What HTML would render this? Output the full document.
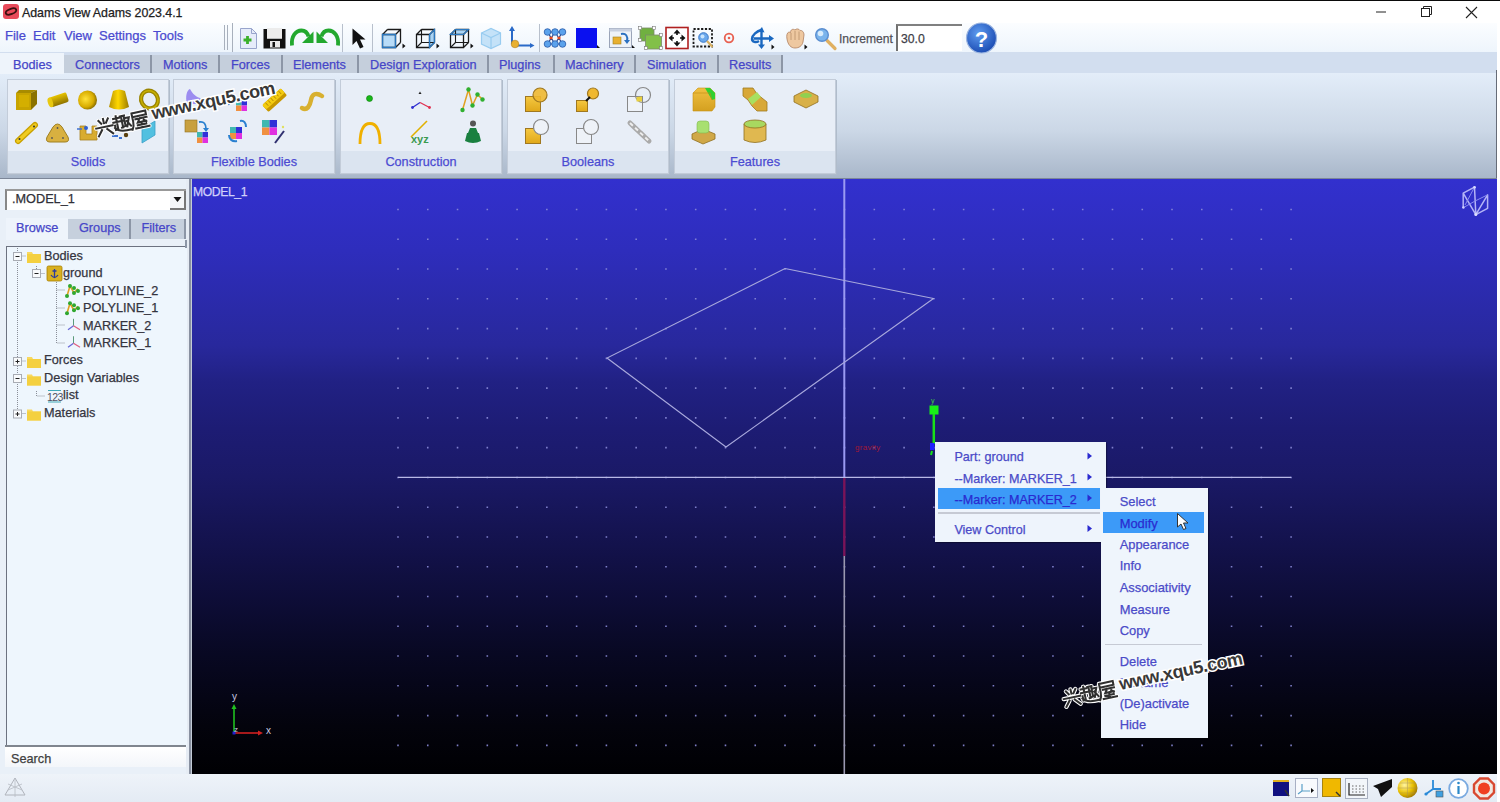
<!DOCTYPE html><html><head><meta charset="utf-8"><style>
*{margin:0;padding:0;box-sizing:border-box}
html,body{width:1500px;height:802px;overflow:hidden;background:#fff;font-family:"Liberation Sans",sans-serif;position:relative}
.a{position:absolute}
.t{position:absolute;white-space:pre;line-height:1;-webkit-text-stroke:0.25px currentColor}
svg{position:absolute;overflow:visible}
</style></head><body>
<div class="a" style="left:0;top:0;width:1500px;height:23px;background:#fff"></div>
<div class="a" style="left:0;top:0;width:1500px;height:1px;background:#0a0a0a"></div>
<div class="a" style="left:0;top:23px;width:1497px;height:29px;background:linear-gradient(#fbfdff,#eef5fc)"></div>
<div class="a" style="left:0;top:52px;width:1497px;height:21px;background:#d2deef"></div>
<div class="a" style="left:0;top:73px;width:1497px;height:106px;background:linear-gradient(#e3edf9,#cbd7e6 55%,#a8b6c9)"></div>
<div class="a" style="left:1496px;top:70px;width:1px;height:109px;background:#666c78"></div>
<div class="a" style="left:1497px;top:23px;width:3px;height:779px;background:#fff"></div>
<div class="a" style="left:0;top:177.5px;width:1497px;height:1.5px;background:#7c8698"></div>
<div class="a" style="left:0;top:179px;width:192px;height:595px;background:#e9f0f8"></div>
<div class="a" style="left:186px;top:179px;width:6px;height:595px;background:linear-gradient(90deg,#e6ecf4 0,#e6ecf4 50%,#8890a0 50%,#8890a0 83%,#c4ccd8 83%)"></div>
<div class="a" style="left:192px;top:179px;width:1305px;height:595px;background:linear-gradient(rgb(50,48,206) 0%,rgb(46,45,188) 12%,rgb(40,40,156) 28%,rgb(33,33,132) 34%,rgb(29,28,116) 42%,rgb(26,25,102) 50%,rgb(17,16,68) 65%,rgb(8,8,34) 80%,rgb(3,3,12) 92%,rgb(0,0,3) 100%)"></div>
<div class="a" style="left:0;top:774px;width:1497px;height:28px;background:linear-gradient(#eef3f9,#e4ebf4)"></div>
<div class="a" style="left:3px;top:4px;width:16px;height:15px;border-radius:3px;background:#e84a5a"></div>
<svg style="left:0;top:0" width="30" height="23"><ellipse cx="11" cy="11.5" rx="5.5" ry="2.6" fill="none" stroke="#3a1010" stroke-width="1.8" transform="rotate(-20 11 11.5)"/></svg>
<div class="t" style="left:22px;top:6.50px;font-size:12.4px;color:#202020;letter-spacing:-0.05px">Adams View Adams 2023.4.1</div>
<svg style="left:1360px;top:0" width="130" height="23"><line x1="16" y1="12" x2="26" y2="12" stroke="#222" stroke-width="1"/><rect x="61.5" y="8.5" width="8" height="8" fill="none" stroke="#222"/><path d="M63.5 8.5V6.5H71.5V14.5H69.5" fill="none" stroke="#222"/><path d="M106 7L117 18M117 7L106 18" stroke="#222" stroke-width="1.1"/></svg>
<div class="t" style="left:5px;top:29.00px;font-size:13px;color:#4a4ad0;">File</div>
<div class="t" style="left:33px;top:29.00px;font-size:13px;color:#4a4ad0;">Edit</div>
<div class="t" style="left:64px;top:29.00px;font-size:13px;color:#4a4ad0;">View</div>
<div class="t" style="left:99px;top:29.00px;font-size:13px;color:#4a4ad0;">Settings</div>
<div class="t" style="left:153px;top:29.00px;font-size:13px;color:#4a4ad0;">Tools</div>
<div class="a" style="left:0;top:53px;width:64px;height:21px;background:#eef4fb"></div>
<div class="a" style="left:64px;top:55px;width:719px;height:18px;background:#c5cfdc"></div>
<div class="t" style="left:13px;top:58.85px;font-size:12.7px;color:#4646c8;">Bodies</div>
<div class="a" style="left:150px;top:55px;width:2px;height:18px;background:#8c96a6"></div>
<div class="t" style="left:75px;top:59.05px;font-size:12.7px;color:#4646c8;">Connectors</div>
<div class="a" style="left:218px;top:55px;width:2px;height:18px;background:#8c96a6"></div>
<div class="t" style="left:163px;top:59.05px;font-size:12.7px;color:#4646c8;">Motions</div>
<div class="a" style="left:281px;top:55px;width:2px;height:18px;background:#8c96a6"></div>
<div class="t" style="left:231px;top:59.05px;font-size:12.7px;color:#4646c8;">Forces</div>
<div class="a" style="left:357px;top:55px;width:2px;height:18px;background:#8c96a6"></div>
<div class="t" style="left:293px;top:59.05px;font-size:12.7px;color:#4646c8;">Elements</div>
<div class="a" style="left:487px;top:55px;width:2px;height:18px;background:#8c96a6"></div>
<div class="t" style="left:370px;top:59.05px;font-size:12.7px;color:#4646c8;">Design Exploration</div>
<div class="a" style="left:553px;top:55px;width:2px;height:18px;background:#8c96a6"></div>
<div class="t" style="left:499px;top:59.05px;font-size:12.7px;color:#4646c8;">Plugins</div>
<div class="a" style="left:634px;top:55px;width:2px;height:18px;background:#8c96a6"></div>
<div class="t" style="left:565px;top:59.05px;font-size:12.7px;color:#4646c8;">Machinery</div>
<div class="a" style="left:717px;top:55px;width:2px;height:18px;background:#8c96a6"></div>
<div class="t" style="left:647px;top:59.05px;font-size:12.7px;color:#4646c8;">Simulation</div>
<div class="a" style="left:781px;top:55px;width:2px;height:18px;background:#8c96a6"></div>
<div class="t" style="left:729px;top:59.05px;font-size:12.7px;color:#4646c8;">Results</div>
<div class="a" style="left:7px;top:79px;width:162px;height:95px;background:#e8eef7;border:1px solid #c3ccd9;box-shadow:1px 1px 0 #b0bccb"></div>
<div class="a" style="left:8px;top:151px;width:160px;height:22px;background:#dbe4f0"></div>
<div class="t" style="left:7px;width:162px;text-align:center;top:155.65px;font-size:12.7px;color:#4b4bd2">Solids</div>
<div class="a" style="left:173px;top:79px;width:162px;height:95px;background:#e8eef7;border:1px solid #c3ccd9;box-shadow:1px 1px 0 #b0bccb"></div>
<div class="a" style="left:174px;top:151px;width:160px;height:22px;background:#dbe4f0"></div>
<div class="t" style="left:173px;width:162px;text-align:center;top:155.65px;font-size:12.7px;color:#4b4bd2">Flexible Bodies</div>
<div class="a" style="left:340px;top:79px;width:162px;height:95px;background:#e8eef7;border:1px solid #c3ccd9;box-shadow:1px 1px 0 #b0bccb"></div>
<div class="a" style="left:341px;top:151px;width:160px;height:22px;background:#dbe4f0"></div>
<div class="t" style="left:340px;width:162px;text-align:center;top:155.65px;font-size:12.7px;color:#4b4bd2">Construction</div>
<div class="a" style="left:507px;top:79px;width:162px;height:95px;background:#e8eef7;border:1px solid #c3ccd9;box-shadow:1px 1px 0 #b0bccb"></div>
<div class="a" style="left:508px;top:151px;width:160px;height:22px;background:#dbe4f0"></div>
<div class="t" style="left:507px;width:162px;text-align:center;top:155.65px;font-size:12.7px;color:#4b4bd2">Booleans</div>
<div class="a" style="left:674px;top:79px;width:162px;height:95px;background:#e8eef7;border:1px solid #c3ccd9;box-shadow:1px 1px 0 #b0bccb"></div>
<div class="a" style="left:675px;top:151px;width:160px;height:22px;background:#dbe4f0"></div>
<div class="t" style="left:674px;width:162px;text-align:center;top:155.65px;font-size:12.7px;color:#4b4bd2">Features</div>
<div class="t" style="left:839px;top:31.99px;font-size:13.6px;color:#505058;transform:scaleX(0.89);transform-origin:left">Increment</div>
<div class="a" style="left:896px;top:24px;width:66px;height:27px;background:#fff;border-left:2px solid #707070;border-top:2px solid #808080"></div>
<div class="t" style="left:901px;top:31.99px;font-size:13.6px;color:#404048;transform:scaleX(0.9);transform-origin:left">30.0</div>
<svg style="left:0;top:0" width="1500" height="802" viewBox="0 0 1500 802">
<defs>
<radialGradient id="gsph" cx="0.4" cy="0.45" r="0.6"><stop offset="0" stop-color="#ffe23a"/><stop offset="0.7" stop-color="#d8ac00"/><stop offset="1" stop-color="#8a6e00"/></radialGradient>
<linearGradient id="gcone" x1="0" x2="1"><stop offset="0" stop-color="#b89200"/><stop offset="0.45" stop-color="#ffd800"/><stop offset="1" stop-color="#9a7a00"/></linearGradient>
<linearGradient id="gcyl" x1="0" y1="0" x2="0" y2="1"><stop offset="0" stop-color="#e8c400"/><stop offset="1" stop-color="#8f7300"/></linearGradient>
<linearGradient id="gbool" x1="0" y1="0" x2="0" y2="1"><stop offset="0" stop-color="#f5c842"/><stop offset="1" stop-color="#e0a81a"/></linearGradient>
<linearGradient id="gfeat" x1="0" y1="0" x2="0" y2="1"><stop offset="0" stop-color="#f0c040"/><stop offset="1" stop-color="#d4a020"/></linearGradient>
<linearGradient id="gblue" x1="0" y1="0" x2="1" y2="1"><stop offset="0" stop-color="#bfe6ff"/><stop offset="1" stop-color="#3d9be0"/></linearGradient>
<radialGradient id="ghelp" cx="0.4" cy="0.35" r="0.7"><stop offset="0" stop-color="#5f9cf0"/><stop offset="1" stop-color="#1848b0"/></radialGradient>
<radialGradient id="gglobe" cx="0.35" cy="0.35" r="0.7"><stop offset="0" stop-color="#fff4a0"/><stop offset="0.6" stop-color="#e8c000"/><stop offset="1" stop-color="#a07800"/></radialGradient>
</defs>
<path d="M224.5 25V50M227.5 25V50M232.5 23V52" stroke="#a8b0bc" stroke-width="1"/>
<path d="M342.5 24V52M372.5 24V52M539.5 24V52" stroke="#b8c0cc" stroke-width="1"/>
<path d="M240.5 28.5H251.5L256.5 33.5V48.5H240.5Z" fill="#e6ecfa" stroke="#98a4cc"/><path d="M251.5 28.5V33.5H256.5" fill="none" stroke="#98a4cc"/>
<path d="M247.5 36V44M243.5 40H251.5" stroke="#3ab02a" stroke-width="2.8"/>
<path d="M263.5 29H267V38.5H282V29H285.5V48.5H263.5Z" fill="#111"/><rect x="267" y="28" width="15" height="10.5" fill="#ececec"/><rect x="270" y="41" width="10" height="6.5" fill="#e8e8e8"/><rect x="272.5" y="42" width="2.5" height="5" fill="#111"/>
<path d="M292 45.5C291 36 296 30.5 301.5 30.5C305 30.5 307.5 33 308.5 36.5" fill="none" stroke="#22a82e" stroke-width="3.8"/><path d="M313.5 31.5V43H302Z" fill="#22a82e"/>
<path d="M338 45.5C339 36 334 30.5 328.5 30.5C325 30.5 322.5 33 321.5 36.5" fill="none" stroke="#22a82e" stroke-width="3.8"/><path d="M316.5 31.5V43H328Z" fill="#22a82e"/>
<path d="M352.5 28.5V45L356.5 41L360 48.5L363.5 47L360 39.5H365.5Z" fill="#111"/>
<g transform="translate(382,28)"><path d="M0.5 6.5H13.5V19.5H0.5Z" fill="#b8dcf8"/><path d="M0.5 6.5H13.5V19.5H0.5ZM5.5 1.5H18.5V14.5M0.5 6.5L5.5 1.5M13.5 6.5L18.5 1.5M13.5 19.5L18.5 14.5" fill="none" stroke="#1a1a1a" stroke-width="1.3"/><path d="M0.5 6.5H13.5V19.5H0.5Z" fill="none" stroke="#2a78c0" stroke-width="1.3"/><path d="M20.5 15.5L23.5 18L20.5 20.5Z" fill="#111"/></g>
<g transform="translate(416,28)"><path d="M13.5 6.5L18.5 1.5V14.5L13.5 19.5Z" fill="#a8d4f6"/><path d="M0.5 6.5H13.5V19.5H0.5ZM5.5 1.5H18.5V14.5M0.5 6.5L5.5 1.5M13.5 6.5L18.5 1.5M13.5 19.5L18.5 14.5" fill="none" stroke="#1a1a1a" stroke-width="1.3"/><path d="M5.5 1.5V14.5H18.5M5.5 14.5L0.5 19.5" fill="none" stroke="#1a1a1a" stroke-width="1.1"/><path d="M13.5 6.5L18.5 1.5V14.5L13.5 19.5Z" fill="none" stroke="#2a78c0" stroke-width="1.2"/><path d="M20.5 15.5L23.5 18L20.5 20.5Z" fill="#111"/></g>
<g transform="translate(450,28)"><path d="M0.5 6.5L5.5 1.5H18.5L13.5 6.5Z" fill="#a8d4f6"/><path d="M0.5 6.5H13.5V19.5H0.5ZM5.5 1.5H18.5V14.5M0.5 6.5L5.5 1.5M13.5 6.5L18.5 1.5M13.5 19.5L18.5 14.5" fill="none" stroke="#1a1a1a" stroke-width="1.3"/><path d="M5.5 1.5V14.5H18.5M5.5 14.5L0.5 19.5" fill="none" stroke="#1a1a1a" stroke-width="1.1"/><path d="M0.5 6.5L5.5 1.5H18.5L13.5 6.5Z" fill="none" stroke="#2a78c0" stroke-width="1.2"/><path d="M20.5 15.5L23.5 18L20.5 20.5Z" fill="#111"/></g>
<path d="M481.5 33L491 28.5L500.5 33V44L491 48.5L481.5 44Z" fill="#c4e2f8" stroke="#98ccf0" stroke-width="1.2"/><path d="M481.5 33L491 37.5L500.5 33M491 37.5V48.5" fill="none" stroke="#98ccf0" stroke-width="1.2"/>
<path d="M512 44V29M515 45.5H531" stroke="#2a6ac8" stroke-width="2"/><path d="M509 31L512 26L515 31Z" fill="#2a6ac8"/><path d="M530 43L534.5 45.5L530 48Z" fill="#2a6ac8"/><circle cx="515" cy="44" r="3.8" fill="#e8b030" stroke="#b08020" stroke-width="0.6"/>
<path d="M547.5 32L555 44M555 32L547.5 44M555 32L562.5 44M562.5 32L555 44M547.5 32H562.5M547.5 44H562.5" stroke="#2a4a90" stroke-width="1.2"/><path d="M549.5 38H552.5M557.5 38H560.5" stroke="#e84a20" stroke-width="2.4"/>
<circle cx="547.5" cy="32" r="3.3" fill="#5aa2ec" stroke="#2a5aa8" stroke-width="0.8"/>
<circle cx="555" cy="32" r="3.3" fill="#5aa2ec" stroke="#2a5aa8" stroke-width="0.8"/>
<circle cx="562.5" cy="32" r="3.3" fill="#5aa2ec" stroke="#2a5aa8" stroke-width="0.8"/>
<circle cx="547.5" cy="44" r="3.3" fill="#5aa2ec" stroke="#2a5aa8" stroke-width="0.8"/>
<circle cx="555" cy="44" r="3.3" fill="#5aa2ec" stroke="#2a5aa8" stroke-width="0.8"/>
<circle cx="562.5" cy="44" r="3.3" fill="#5aa2ec" stroke="#2a5aa8" stroke-width="0.8"/>
<rect x="576" y="28" width="21" height="20" fill="#0a10f0"/><path d="M597 45L600 48H597Z" fill="#111"/>
<rect x="609.5" y="28.5" width="22" height="19" fill="#eef2f8" stroke="#9aa4b8"/><rect x="609.5" y="28.5" width="22" height="3" fill="#c8d0e0"/><rect x="613" y="37" width="8" height="7" fill="#e8b030" stroke="#a08020" stroke-width="0.6"/><path d="M621 34C626 33 628 36 627 41" fill="none" stroke="#2a70c0" stroke-width="2"/><path d="M624 40L627 44L630 40Z" fill="#2a70c0"/><path d="M632 45L635 48H632Z" fill="#111"/>
<rect x="640" y="28" width="14" height="13" fill="#70b040" stroke="#7a8a6a" stroke-width="0.8"/><rect x="645.5" y="35" width="16" height="14" fill="#82c048" stroke="#7a8a6a" stroke-width="0.8"/>
<rect x="638.5" y="26.5" width="3" height="3" fill="#fff" stroke="#777" stroke-width="0.6"/>
<rect x="652.5" y="26.5" width="3" height="3" fill="#fff" stroke="#777" stroke-width="0.6"/>
<rect x="638.5" y="38.5" width="3" height="3" fill="#fff" stroke="#777" stroke-width="0.6"/>
<rect x="659.5" y="33.5" width="3" height="3" fill="#fff" stroke="#777" stroke-width="0.6"/>
<rect x="644.5" y="46.5" width="3" height="3" fill="#fff" stroke="#777" stroke-width="0.6"/>
<rect x="659.5" y="46.5" width="3" height="3" fill="#fff" stroke="#777" stroke-width="0.6"/>
<rect x="666" y="27.5" width="22" height="21" fill="#fff" stroke="#b02020" stroke-width="1.6"/>
<path d="M677 32V35M677 41V44M671 38H674M680 38H683" stroke="#111" stroke-width="1.6"/><path d="M673.5 33.5L677 29.5L680.5 33.5ZM673.5 42.5L677 46.5L680.5 42.5ZM672.5 34.5L668.5 38L672.5 41.5ZM681.5 34.5L685.5 38L681.5 41.5Z" fill="#111"/>
<rect x="693.5" y="29" width="18.5" height="17.5" fill="none" stroke="#1a1a1a" stroke-width="1.8" stroke-dasharray="2.2 1.6"/><circle cx="703.5" cy="37.5" r="4.8" fill="#6aa8ec" stroke="#3a78c8" stroke-width="1"/><circle cx="702.5" cy="36.5" r="2" fill="#c8e4fc"/><path d="M707 41L712.5 47" stroke="#d8b060" stroke-width="2.2"/>
<circle cx="729" cy="38" r="4.3" fill="none" stroke="#e86050" stroke-width="1.8"/><circle cx="729" cy="38" r="1.3" fill="#e86050"/>
<path d="M761.5 30C757 31 752 35 752 39C752 42 756 43 759 41M761.5 30V47M753.5 38.5H770" fill="none" stroke="#1a68c0" stroke-width="2.4"/><path d="M758 31.5L762 27L764.5 32.5Z M769 35L774 38.5L769 42Z M758 44.5L761.5 49L765 44.5Z" fill="#1a68c0"/><path d="M771.5 44.5L774.5 47L771.5 49.5Z" fill="#111"/>
<path d="M787 39C786 34 788 31 790.5 32.5C790.5 29.5 793 28.5 795 30C796 28.5 799 28.5 800 30.5C802 30 804 32 804 35L803 42C802 46 799 48 795 48C791 48 788 45 787 39Z" fill="#eec8a0" stroke="#b08060" stroke-width="0.8"/><path d="M791 33V40M795 31V40M799 31.5V40" stroke="#b8906a" stroke-width="0.8"/><path d="M804.5 44.5L807.5 47L804.5 49.5Z" fill="#111"/>
<path d="M827 40.5L835 48.5" stroke="#e0b060" stroke-width="3.2" stroke-linecap="round"/><circle cx="822" cy="35" r="6.3" fill="#7ab4ec" stroke="#5a8ed0" stroke-width="1.4"/><circle cx="820.5" cy="33.5" r="2.8" fill="#d8ecfc"/>
<circle cx="981.5" cy="38" r="15" fill="url(#ghelp)" stroke="#9ab4e0" stroke-width="1.2"/><text x="981.5" y="47" font-family="Liberation Sans" font-weight="bold" font-size="22" fill="#fff" text-anchor="middle">?</text>
<path d="M16 93H31V110H16Z" fill="#c8a400"/><path d="M19 95H29V107H19Z" fill="#d8b400" opacity="0.7"/><path d="M16 93L19 90H37L31 93Z" fill="#a88c00"/><path d="M31 93L37 90V104L31 110Z" fill="#8a7200"/>
<g transform="rotate(-18 58 100)"><rect x="49" y="95" width="19" height="10" rx="2" fill="url(#gcyl)"/><ellipse cx="50" cy="100" rx="2.5" ry="5" fill="#e8c810"/></g>
<circle cx="87.5" cy="100" r="9.5" fill="url(#gsph)"/>
<path d="M113 91Q119 88 125 91L129 107Q119 112 109 107Z" fill="url(#gcone)"/>
<ellipse cx="149.5" cy="99.5" rx="8.3" ry="9" fill="none" stroke="#9a8400" stroke-width="4.2" transform="rotate(-30 149.5 99.5)"/><ellipse cx="149.5" cy="99.5" rx="8.3" ry="9" fill="none" stroke="#c8b000" stroke-width="1.5" transform="rotate(-30 149.5 99.5)"/>
<path d="M18 141L35 125" stroke="#c8a000" stroke-width="6" stroke-linecap="round"/><path d="M18 141L35 125" stroke="#f0cc20" stroke-width="3.5" stroke-linecap="round"/><circle cx="19.5" cy="139" r="1" fill="#333"/><circle cx="34" cy="126.5" r="1" fill="#333"/>
<path d="M57.5 124Q60 124 62 127L68 137Q70 142 65 142H50Q45 142 47 137L53 127Q55 124 57.5 124Z" fill="#d8b040" stroke="#a08020"/><circle cx="57.5" cy="128" r="0.9" fill="#555"/><circle cx="52" cy="138" r="0.9" fill="#555"/><circle cx="63" cy="138" r="0.9" fill="#555"/>
<path d="M80 126H86V134H92V126H97V140H80Z" fill="#d8ac30" stroke="#a88220" stroke-width="0.8"/><circle cx="86" cy="128" r="2" fill="#3060d0"/><path d="M77 129H82" stroke="#4070d0" stroke-width="1.5"/>
<path d="M112 136H118M119 138H122" stroke="#3a70d0" stroke-width="1.8"/><circle cx="126" cy="135" r="2.2" fill="#5a4010"/>
<path d="M155 121V135L142 143V129Z" fill="#52c0e0" stroke="#3aa0c8" stroke-width="0.8"/>
<path d="M187 104C185 96 187 90 190 89C192 92 194 96 200 98C204 99 206 101 205 104Z" fill="#9c8cf0"/>
<rect x="236" y="100" width="5.5" height="5.5" fill="#40b8b0"/><rect x="241.5" y="100" width="5.5" height="5.5" fill="#3030d8"/><rect x="236" y="105.5" width="5.5" height="5.5" fill="#f09040"/><rect x="241.5" y="105.5" width="5.5" height="5.5" fill="#e030e0"/>
<path d="M229 105C227 100 229 94 234 92" fill="none" stroke="#2a80d0" stroke-width="2"/><path d="M240 91C244 91 247 94 247 97" fill="none" stroke="#2a80d0" stroke-width="1.5" stroke-dasharray="2 1.5"/>
<g transform="rotate(-42 274.5 100)"><rect x="262" y="95.5" width="25" height="9.5" rx="1.5" fill="#c89800"/><rect x="262" y="95.5" width="25" height="6" rx="1.5" fill="#f4cc10"/><path d="M266 96V100M269.5 96V100M273 96V100M276.5 96V100M280 96V100M283.5 96V100" stroke="#b08400" stroke-width="0.9"/></g>
<path d="M302 108C307 111 310 106 311 100C312 94 316 92 322 96" fill="none" stroke="#d8b030" stroke-width="4.5" stroke-linecap="round"/>
<rect x="185" y="120" width="12" height="12" fill="#c8a040" stroke="#907020" stroke-width="0.6"/><rect x="197" y="132" width="5.5" height="5.5" fill="#40b8b0"/><rect x="202.5" y="132" width="5.5" height="5.5" fill="#3030d8"/><rect x="197" y="137.5" width="5.5" height="5.5" fill="#f09040"/><rect x="202.5" y="137.5" width="5.5" height="5.5" fill="#e030e0"/><path d="M199 122C204 121 206 124 206 129" fill="none" stroke="#2a80d0" stroke-width="1.8"/><path d="M203 128L206 132L209 128Z" fill="#2a80d0"/>
<rect x="230" y="127" width="6.0" height="6.0" fill="#40b8b0"/><rect x="236.0" y="127" width="6.0" height="6.0" fill="#3030d8"/><rect x="230" y="133.0" width="6.0" height="6.0" fill="#f09040"/><rect x="236.0" y="133.0" width="6.0" height="6.0" fill="#e030e0"/><path d="M240 121C244 120 246 123 246 127M237 141C232 142 229 139 229 135" fill="none" stroke="#2a80d0" stroke-width="2"/>
<rect x="262" y="120" width="7.5" height="7.5" fill="#40b8b0"/><rect x="269.5" y="120" width="7.5" height="7.5" fill="#3030d8"/><rect x="262" y="127.5" width="7.5" height="7.5" fill="#f09040"/><rect x="269.5" y="127.5" width="7.5" height="7.5" fill="#e030e0"/><path d="M275 143L284 131" stroke="#303070" stroke-width="2"/><circle cx="283" cy="127" r="1.2" fill="#e0e060"/>
<circle cx="369.5" cy="98.5" r="3" fill="#18b818" stroke="#0a7a0a" stroke-width="0.6"/>
<path d="M420 91.5L418.5 94H421.5Z" fill="#222"/><path d="M412.5 107.5L420 102.5" stroke="#3030d0" stroke-width="1.3"/><path d="M420 102.5L429.5 107.5" stroke="#e03050" stroke-width="1.3"/><circle cx="412.5" cy="107.5" r="1.4" fill="#3030d0"/><circle cx="429.5" cy="107.5" r="1.4" fill="#e03050"/>
<path d="M462.5 110L468.5 89.5L472.5 105.5L477.5 94.5L482.5 99.5" fill="none" stroke="#e0a020" stroke-width="1.5"/>
<circle cx="462.5" cy="110" r="2.2" fill="#30b030"/>
<circle cx="468.5" cy="89.5" r="2.2" fill="#30b030"/>
<circle cx="472.5" cy="105.5" r="2.2" fill="#30b030"/>
<circle cx="477.5" cy="94.5" r="2.2" fill="#30b030"/>
<circle cx="482.5" cy="99.5" r="2.2" fill="#30b030"/>
<path d="M360 144C360 128 364 123.5 370 123.5C376 123.5 380 128 380 144" fill="none" stroke="#f0b000" stroke-width="2.8"/>
<path d="M411 137L427 121" stroke="#e0b000" stroke-width="1.6"/><text x="411" y="143" font-family="Liberation Sans" font-weight="bold" font-size="11" fill="#3a9a50">xyz</text>
<circle cx="473" cy="123.5" r="3" fill="#555"/><path d="M470 128H476L478 133H479L481 141Q473 145 465 141L467 133H468Z" fill="#1a8040"/>
<rect x="525.5" y="96.5" width="15" height="15" fill="url(#gbool)" stroke="#a07820"/><circle cx="540" cy="95" r="7" fill="#f0b830" fill-opacity="0.9" stroke="#a07820" stroke-width="1.2"/>
<rect x="576.5" y="100.5" width="11" height="11" fill="url(#gbool)" stroke="#a07820"/><circle cx="593" cy="93.5" r="5.5" fill="#f0b830" stroke="#a07820" stroke-width="1.2"/><path d="M586 101L590 97" stroke="#111" stroke-width="2"/>
<rect x="627.5" y="96.5" width="15" height="15" fill="#eef2f8" stroke="#888"/><circle cx="643" cy="95" r="7.5" fill="none" stroke="#888" stroke-width="1.2"/><path d="M636.5 97V101.5H642V96.5Z" fill="#e8d040"/>
<rect x="525.5" y="128.5" width="15" height="15" fill="url(#gbool)" stroke="#a07820"/><circle cx="541" cy="127" r="7.5" fill="#eef2f8" stroke="#888" stroke-width="1.2"/>
<rect x="576.5" y="128.5" width="15" height="15" fill="#eef2f8" stroke="#888"/><circle cx="591" cy="127" r="7.5" fill="#eef2f8" stroke="#888" stroke-width="1.2"/>
<path d="M630 123L649 141" stroke="#aaa" stroke-width="5" stroke-linecap="round" stroke-dasharray="6 1"/><path d="M630 123L649 141" stroke="#eee" stroke-width="2" stroke-dasharray="4 3"/>
<path d="M693 93L698 88H710L715 93V107L712 111H693Z" fill="url(#gfeat)" stroke="#c89010" stroke-width="0.6"/><path d="M705 88H710L715 93V99L712 100Z" fill="#30d030"/><path d="M693 93H710L712 100" fill="none" stroke="#c08a10" stroke-width="0.6"/>
<path d="M743 88H753L757 94L767 102V111H757L752 106L748 100L743 96Z" fill="#d8a838" stroke="#a07820" stroke-width="0.8"/><path d="M748 99L757 92L761 97L752 105Z" fill="#a8e060"/>
<path d="M794 96L806 90L818 96V102L806 108L794 102Z" fill="#d8b048" stroke="#907020" stroke-width="0.8"/><ellipse cx="806" cy="95.5" rx="6" ry="2.5" fill="#90d050"/>
<path d="M692 134L703 129L715 134V139L703 144L692 139Z" fill="#d0a848" stroke="#907020" stroke-width="0.8"/><rect x="697" y="121" width="12" height="12" rx="3" fill="#a8e070" stroke="#80b850" stroke-width="0.6"/>
<path d="M744 124V140Q755 145 766 140V124Z" fill="#e0b850" stroke="#907020" stroke-width="0.8"/><ellipse cx="755" cy="124" rx="11" ry="4" fill="#a8d860" stroke="#907020" stroke-width="0.8"/>
<path d="M5 795L15 778L25 795Z" fill="none" stroke="#b0b4bc" stroke-width="1"/><path d="M15 778V797M8 784L22 790M22 784L8 790" stroke="#b8bcc4" stroke-width="0.8"/>
<rect x="1273" y="780" width="16" height="16" fill="#101080"/><rect x="1273" y="780" width="16" height="2" fill="#e0b020"/><path d="M1285 790L1289 796" stroke="#333" stroke-width="1.5"/>
<rect x="1295.5" y="778.5" width="22" height="19" fill="#f8fafd" stroke="#a8b0c4"/><path d="M1302 784V791L1298 794M1302 791H1310" fill="none" stroke="#5aa0c8" stroke-width="1.2"/><path d="M1311 788L1314 790.5L1311 793Z" fill="#111"/>
<rect x="1322.5" y="778.5" width="18" height="18" fill="#f0b800" stroke="#a88410"/><path d="M1336 792L1340 796" stroke="#333" stroke-width="1.5"/>
<rect x="1345.5" y="778.5" width="22" height="20" fill="#f2f6fa" stroke="#a8b0c0"/><path d="M1349 783V795H1365" fill="none" stroke="#222" stroke-width="1.2"/><path d="M1352 786H1364M1352 789H1364M1352 792H1364" stroke="#666" stroke-width="1" stroke-dasharray="1.5 2"/>
<path d="M1373 786L1392 779V787L1381 797L1378 789Z" fill="#111"/>
<circle cx="1407.5" cy="788" r="10" fill="url(#gglobe)"/><path d="M1407.5 778V798M1400 783H1416M1398 788H1417M1400 793H1416" stroke="#a89060" stroke-width="0.6" opacity="0.7"/>
<path d="M1433 789V780M1433 789H1441M1433 789L1426 794" stroke="#2a8ad8" stroke-width="1.8"/><circle cx="1426" cy="794" r="1.6" fill="#2a8ad8"/><rect x="1436" y="791" width="7" height="6" fill="#40a0e0" stroke="#555" stroke-width="0.6"/>
<circle cx="1458.5" cy="788.5" r="9.3" fill="#fff" stroke="#7aaae0" stroke-width="1.8"/><circle cx="1458.5" cy="783" r="1.3" fill="#2a88c8"/><path d="M1458.5 786V794" stroke="#2a88c8" stroke-width="2.2"/>
<path d="M1480 778.5H1488L1494 784.5V792.5L1488 798.5H1480L1474 792.5V784.5Z" fill="#f0e8e0" stroke="#d84830" stroke-width="2.4"/><circle cx="1484" cy="788.5" r="6" fill="#f04020"/>
</svg>
<div class="a" style="left:5px;top:189px;width:181px;height:21px;background:#fff;border-left:2px solid #888;border-top:2px solid #999"></div>
<div class="a" style="left:170px;top:191px;width:16px;height:19px;background:#f4f6f8;border-right:2px solid #777;border-bottom:2px solid #777"></div>
<svg style="left:0;top:0" width="192" height="260"><path d="M173.5 197H181.5L177.5 202Z" fill="#111"/></svg>
<div class="t" style="left:12px;top:193.25px;font-size:12.7px;color:#303038;">.MODEL_1</div>
<div class="a" style="left:6px;top:218px;width:62px;height:22px;background:#eef4fb"></div>
<div class="a" style="left:68px;top:219px;width:117px;height:20px;background:#c6d0dd"></div>
<div class="a" style="left:129px;top:219px;width:2px;height:20px;background:#8c96a6"></div>
<div class="a" style="left:184px;top:219px;width:2px;height:20px;background:#8c96a6"></div>
<div class="t" style="left:16px;top:222.25px;font-size:12.7px;color:#4646c8;">Browse</div>
<div class="t" style="left:79px;top:222.25px;font-size:12.7px;color:#4646c8;">Groups</div>
<div class="t" style="left:141.5px;top:222.25px;font-size:12.7px;color:#4646c8;">Filters</div>
<div class="a" style="left:5.5px;top:245.5px;width:181.5px;height:501px;background:#eef6fd;border-left:1.5px solid #6c7280;border-top:1.5px solid #6c7280"></div>
<div class="a" style="left:185px;top:240px;width:2px;height:8px;background:#8c96a6"></div>
<div class="a" style="left:5px;top:745px;width:181px;height:1.5px;background:#80868f"></div>
<div class="a" style="left:5px;top:746.5px;width:181px;height:20px;background:linear-gradient(#ffffff,#f3f6fa)"></div>
<div class="t" style="left:11px;top:752.95px;font-size:12.7px;color:#404040;">Search</div>
<svg style="left:0;top:0" width="1500" height="802" viewBox="0 0 1500 802">
<path d="M17.5 248V414M56.5 282V343H65M56.5 290H65M56.5 308H65M56.5 325H65M36.5 266V269M36.5 391V396H45" fill="none" stroke="#8a8e98" stroke-width="1" stroke-dasharray="1 1"/>
<path d="M21.5 256H26M40.5 273.5H45M21.5 361H26M21.5 378.5H26M21.5 413.5H26" stroke="#8a8e98" stroke-width="1" stroke-dasharray="1 1"/>
<rect x="13.5" y="252.5" width="8" height="8" fill="#f8fafc" stroke="#a8acb4" stroke-width="1"/><path d="M15.5 256.5H19.5" stroke="#222" stroke-width="1"/><path d="M27 252H32L33 254H41V263H27Z" fill="#f8d860"/><rect x="27" y="254" width="14" height="9" fill="#f4d040"/>
<rect x="32.5" y="269.5" width="8" height="8" fill="#f8fafc" stroke="#a8acb4" stroke-width="1"/><path d="M34.5 273.5H38.5" stroke="#222" stroke-width="1"/>
<rect x="47" y="266" width="15" height="15" rx="1.5" fill="#d8b020" stroke="#a88000" stroke-width="0.8"/><path d="M54.5 269V278M51 275Q54.5 280 58 275M52.5 271H56.5" fill="none" stroke="#2a3aa0" stroke-width="1.3"/>
<path d="M67 295.9L70 285.9L74 292.9L78 288.9" fill="none" stroke="#e0a020" stroke-width="1.6"/>
<circle cx="67" cy="295.9" r="2" fill="#30a830"/>
<circle cx="70" cy="285.9" r="2" fill="#30a830"/>
<circle cx="74" cy="292.9" r="2" fill="#30a830"/>
<circle cx="74" cy="287.9" r="2" fill="#30a830"/>
<circle cx="78" cy="290.9" r="2" fill="#30a830"/>
<path d="M67 313.35L70 303.35L74 310.35L78 306.35" fill="none" stroke="#e0a020" stroke-width="1.6"/>
<circle cx="67" cy="313.35" r="2" fill="#30a830"/>
<circle cx="70" cy="303.35" r="2" fill="#30a830"/>
<circle cx="74" cy="310.35" r="2" fill="#30a830"/>
<circle cx="74" cy="305.35" r="2" fill="#30a830"/>
<circle cx="78" cy="308.35" r="2" fill="#30a830"/>
<path d="M73.5 318.8V325.8" stroke="#5a9a7a" stroke-width="1"/><path d="M73.5 325.8L68 329.8" stroke="#6a6ad8" stroke-width="1.3"/><path d="M73.5 325.8L80 329.8" stroke="#e06080" stroke-width="1.3"/>
<path d="M73.5 336.25V343.25" stroke="#5a9a7a" stroke-width="1"/><path d="M73.5 343.25L68 347.25" stroke="#6a6ad8" stroke-width="1.3"/><path d="M73.5 343.25L80 347.25" stroke="#e06080" stroke-width="1.3"/>
<rect x="13.5" y="357.5" width="8" height="8" fill="#f8fafc" stroke="#a8acb4" stroke-width="1"/><path d="M15.5 361.5H19.5" stroke="#222" stroke-width="1"/><path d="M17.5 359.5V363.5" stroke="#222" stroke-width="1"/><path d="M27 357H32L33 359H41V368H27Z" fill="#f8d860"/><rect x="27" y="359" width="14" height="9" fill="#f4d040"/>
<rect x="13.5" y="374.5" width="8" height="8" fill="#f8fafc" stroke="#a8acb4" stroke-width="1"/><path d="M15.5 378.5H19.5" stroke="#222" stroke-width="1"/><path d="M27 374.5H32L33 376.5H41V385.5H27Z" fill="#f8d860"/><rect x="27" y="376.5" width="14" height="9" fill="#f4d040"/>
<path d="M48 390.5H61M48 402H61" stroke="#40a8b8" stroke-width="1.2"/><text x="47" y="400.5" font-family="Liberation Sans" font-size="10.5" fill="#505060" letter-spacing="-0.6">123</text>
<rect x="13.5" y="410" width="8" height="8" fill="#f8fafc" stroke="#a8acb4" stroke-width="1"/><path d="M15.5 414H19.5" stroke="#222" stroke-width="1"/><path d="M17.5 412V416" stroke="#222" stroke-width="1"/><path d="M27 409.5H32L33 411.5H41V420.5H27Z" fill="#f8d860"/><rect x="27" y="411.5" width="14" height="9" fill="#f4d040"/>
</svg>
<div class="t" style="left:44px;top:249.75px;font-size:12.7px;color:#34343e;">Bodies</div>
<div class="t" style="left:63px;top:267.20px;font-size:12.7px;color:#34343e;">ground</div>
<div class="t" style="left:83px;top:284.65px;font-size:12.7px;color:#34343e;">POLYLINE_2</div>
<div class="t" style="left:83px;top:302.10px;font-size:12.7px;color:#34343e;">POLYLINE_1</div>
<div class="t" style="left:83px;top:319.55px;font-size:12.7px;color:#34343e;">MARKER_2</div>
<div class="t" style="left:83px;top:337.00px;font-size:12.7px;color:#34343e;">MARKER_1</div>
<div class="t" style="left:44px;top:354.45px;font-size:12.7px;color:#34343e;">Forces</div>
<div class="t" style="left:44px;top:371.90px;font-size:12.7px;color:#34343e;">Design Variables</div>
<div class="t" style="left:63px;top:389.35px;font-size:12.7px;color:#34343e;">list</div>
<div class="t" style="left:44px;top:406.80px;font-size:12.7px;color:#34343e;">Materials</div>
<svg style="left:0;top:0" width="1500" height="802" viewBox="0 0 1500 802">
<path d="M397.20 209.50h1.6M426.97 209.50h1.6M456.74 209.50h1.6M486.51 209.50h1.6M516.28 209.50h1.6M546.05 209.50h1.6M575.82 209.50h1.6M605.59 209.50h1.6M635.36 209.50h1.6M665.13 209.50h1.6M694.90 209.50h1.6M724.67 209.50h1.6M754.44 209.50h1.6M784.21 209.50h1.6M813.98 209.50h1.6M843.75 209.50h1.6M873.52 209.50h1.6M903.29 209.50h1.6M933.06 209.50h1.6M962.83 209.50h1.6M992.60 209.50h1.6M1022.37 209.50h1.6M1052.14 209.50h1.6M1081.91 209.50h1.6M1111.68 209.50h1.6M1141.45 209.50h1.6M1171.22 209.50h1.6M1200.99 209.50h1.6M1230.76 209.50h1.6M1260.53 209.50h1.6M1290.30 209.50h1.6M397.20 239.27h1.6M426.97 239.27h1.6M456.74 239.27h1.6M486.51 239.27h1.6M516.28 239.27h1.6M546.05 239.27h1.6M575.82 239.27h1.6M605.59 239.27h1.6M635.36 239.27h1.6M665.13 239.27h1.6M694.90 239.27h1.6M724.67 239.27h1.6M754.44 239.27h1.6M784.21 239.27h1.6M813.98 239.27h1.6M843.75 239.27h1.6M873.52 239.27h1.6M903.29 239.27h1.6M933.06 239.27h1.6M962.83 239.27h1.6M992.60 239.27h1.6M1022.37 239.27h1.6M1052.14 239.27h1.6M1081.91 239.27h1.6M1111.68 239.27h1.6M1141.45 239.27h1.6M1171.22 239.27h1.6M1200.99 239.27h1.6M1230.76 239.27h1.6M1260.53 239.27h1.6M1290.30 239.27h1.6M397.20 269.04h1.6M426.97 269.04h1.6M456.74 269.04h1.6M486.51 269.04h1.6M516.28 269.04h1.6M546.05 269.04h1.6M575.82 269.04h1.6M605.59 269.04h1.6M635.36 269.04h1.6M665.13 269.04h1.6M694.90 269.04h1.6M724.67 269.04h1.6M754.44 269.04h1.6M784.21 269.04h1.6M813.98 269.04h1.6M843.75 269.04h1.6M873.52 269.04h1.6M903.29 269.04h1.6M933.06 269.04h1.6M962.83 269.04h1.6M992.60 269.04h1.6M1022.37 269.04h1.6M1052.14 269.04h1.6M1081.91 269.04h1.6M1111.68 269.04h1.6M1141.45 269.04h1.6M1171.22 269.04h1.6M1200.99 269.04h1.6M1230.76 269.04h1.6M1260.53 269.04h1.6M1290.30 269.04h1.6M397.20 298.81h1.6M426.97 298.81h1.6M456.74 298.81h1.6M486.51 298.81h1.6M516.28 298.81h1.6M546.05 298.81h1.6M575.82 298.81h1.6M605.59 298.81h1.6M635.36 298.81h1.6M665.13 298.81h1.6M694.90 298.81h1.6M724.67 298.81h1.6M754.44 298.81h1.6M784.21 298.81h1.6M813.98 298.81h1.6M843.75 298.81h1.6M873.52 298.81h1.6M903.29 298.81h1.6M933.06 298.81h1.6M962.83 298.81h1.6M992.60 298.81h1.6M1022.37 298.81h1.6M1052.14 298.81h1.6M1081.91 298.81h1.6M1111.68 298.81h1.6M1141.45 298.81h1.6M1171.22 298.81h1.6M1200.99 298.81h1.6M1230.76 298.81h1.6M1260.53 298.81h1.6M1290.30 298.81h1.6M397.20 328.58h1.6M426.97 328.58h1.6M456.74 328.58h1.6M486.51 328.58h1.6M516.28 328.58h1.6M546.05 328.58h1.6M575.82 328.58h1.6M605.59 328.58h1.6M635.36 328.58h1.6M665.13 328.58h1.6M694.90 328.58h1.6M724.67 328.58h1.6M754.44 328.58h1.6M784.21 328.58h1.6M813.98 328.58h1.6M843.75 328.58h1.6M873.52 328.58h1.6M903.29 328.58h1.6M933.06 328.58h1.6M962.83 328.58h1.6M992.60 328.58h1.6M1022.37 328.58h1.6M1052.14 328.58h1.6M1081.91 328.58h1.6M1111.68 328.58h1.6M1141.45 328.58h1.6M1171.22 328.58h1.6M1200.99 328.58h1.6M1230.76 328.58h1.6M1260.53 328.58h1.6M1290.30 328.58h1.6M397.20 358.35h1.6M426.97 358.35h1.6M456.74 358.35h1.6M486.51 358.35h1.6M516.28 358.35h1.6M546.05 358.35h1.6M575.82 358.35h1.6M605.59 358.35h1.6M635.36 358.35h1.6M665.13 358.35h1.6M694.90 358.35h1.6M724.67 358.35h1.6M754.44 358.35h1.6M784.21 358.35h1.6M813.98 358.35h1.6M843.75 358.35h1.6M873.52 358.35h1.6M903.29 358.35h1.6M933.06 358.35h1.6M962.83 358.35h1.6M992.60 358.35h1.6M1022.37 358.35h1.6M1052.14 358.35h1.6M1081.91 358.35h1.6M1111.68 358.35h1.6M1141.45 358.35h1.6M1171.22 358.35h1.6M1200.99 358.35h1.6M1230.76 358.35h1.6M1260.53 358.35h1.6M1290.30 358.35h1.6M397.20 388.12h1.6M426.97 388.12h1.6M456.74 388.12h1.6M486.51 388.12h1.6M516.28 388.12h1.6M546.05 388.12h1.6M575.82 388.12h1.6M605.59 388.12h1.6M635.36 388.12h1.6M665.13 388.12h1.6M694.90 388.12h1.6M724.67 388.12h1.6M754.44 388.12h1.6M784.21 388.12h1.6M813.98 388.12h1.6M843.75 388.12h1.6M873.52 388.12h1.6M903.29 388.12h1.6M933.06 388.12h1.6M962.83 388.12h1.6M992.60 388.12h1.6M1022.37 388.12h1.6M1052.14 388.12h1.6M1081.91 388.12h1.6M1111.68 388.12h1.6M1141.45 388.12h1.6M1171.22 388.12h1.6M1200.99 388.12h1.6M1230.76 388.12h1.6M1260.53 388.12h1.6M1290.30 388.12h1.6M397.20 417.89h1.6M426.97 417.89h1.6M456.74 417.89h1.6M486.51 417.89h1.6M516.28 417.89h1.6M546.05 417.89h1.6M575.82 417.89h1.6M605.59 417.89h1.6M635.36 417.89h1.6M665.13 417.89h1.6M694.90 417.89h1.6M724.67 417.89h1.6M754.44 417.89h1.6M784.21 417.89h1.6M813.98 417.89h1.6M843.75 417.89h1.6M873.52 417.89h1.6M903.29 417.89h1.6M933.06 417.89h1.6M962.83 417.89h1.6M992.60 417.89h1.6M1022.37 417.89h1.6M1052.14 417.89h1.6M1081.91 417.89h1.6M1111.68 417.89h1.6M1141.45 417.89h1.6M1171.22 417.89h1.6M1200.99 417.89h1.6M1230.76 417.89h1.6M1260.53 417.89h1.6M1290.30 417.89h1.6M397.20 447.66h1.6M426.97 447.66h1.6M456.74 447.66h1.6M486.51 447.66h1.6M516.28 447.66h1.6M546.05 447.66h1.6M575.82 447.66h1.6M605.59 447.66h1.6M635.36 447.66h1.6M665.13 447.66h1.6M694.90 447.66h1.6M724.67 447.66h1.6M754.44 447.66h1.6M784.21 447.66h1.6M813.98 447.66h1.6M843.75 447.66h1.6M873.52 447.66h1.6M903.29 447.66h1.6M933.06 447.66h1.6M962.83 447.66h1.6M992.60 447.66h1.6M1022.37 447.66h1.6M1052.14 447.66h1.6M1081.91 447.66h1.6M1111.68 447.66h1.6M1141.45 447.66h1.6M1171.22 447.66h1.6M1200.99 447.66h1.6M1230.76 447.66h1.6M1260.53 447.66h1.6M1290.30 447.66h1.6M397.20 477.43h1.6M426.97 477.43h1.6M456.74 477.43h1.6M486.51 477.43h1.6M516.28 477.43h1.6M546.05 477.43h1.6M575.82 477.43h1.6M605.59 477.43h1.6M635.36 477.43h1.6M665.13 477.43h1.6M694.90 477.43h1.6M724.67 477.43h1.6M754.44 477.43h1.6M784.21 477.43h1.6M813.98 477.43h1.6M843.75 477.43h1.6M873.52 477.43h1.6M903.29 477.43h1.6M933.06 477.43h1.6M962.83 477.43h1.6M992.60 477.43h1.6M1022.37 477.43h1.6M1052.14 477.43h1.6M1081.91 477.43h1.6M1111.68 477.43h1.6M1141.45 477.43h1.6M1171.22 477.43h1.6M1200.99 477.43h1.6M1230.76 477.43h1.6M1260.53 477.43h1.6M1290.30 477.43h1.6M397.20 507.20h1.6M426.97 507.20h1.6M456.74 507.20h1.6M486.51 507.20h1.6M516.28 507.20h1.6M546.05 507.20h1.6M575.82 507.20h1.6M605.59 507.20h1.6M635.36 507.20h1.6M665.13 507.20h1.6M694.90 507.20h1.6M724.67 507.20h1.6M754.44 507.20h1.6M784.21 507.20h1.6M813.98 507.20h1.6M843.75 507.20h1.6M873.52 507.20h1.6M903.29 507.20h1.6M933.06 507.20h1.6M962.83 507.20h1.6M992.60 507.20h1.6M1022.37 507.20h1.6M1052.14 507.20h1.6M1081.91 507.20h1.6M1111.68 507.20h1.6M1141.45 507.20h1.6M1171.22 507.20h1.6M1200.99 507.20h1.6M1230.76 507.20h1.6M1260.53 507.20h1.6M1290.30 507.20h1.6M397.20 536.97h1.6M426.97 536.97h1.6M456.74 536.97h1.6M486.51 536.97h1.6M516.28 536.97h1.6M546.05 536.97h1.6M575.82 536.97h1.6M605.59 536.97h1.6M635.36 536.97h1.6M665.13 536.97h1.6M694.90 536.97h1.6M724.67 536.97h1.6M754.44 536.97h1.6M784.21 536.97h1.6M813.98 536.97h1.6M843.75 536.97h1.6M873.52 536.97h1.6M903.29 536.97h1.6M933.06 536.97h1.6M962.83 536.97h1.6M992.60 536.97h1.6M1022.37 536.97h1.6M1052.14 536.97h1.6M1081.91 536.97h1.6M1111.68 536.97h1.6M1141.45 536.97h1.6M1171.22 536.97h1.6M1200.99 536.97h1.6M1230.76 536.97h1.6M1260.53 536.97h1.6M1290.30 536.97h1.6M397.20 566.74h1.6M426.97 566.74h1.6M456.74 566.74h1.6M486.51 566.74h1.6M516.28 566.74h1.6M546.05 566.74h1.6M575.82 566.74h1.6M605.59 566.74h1.6M635.36 566.74h1.6M665.13 566.74h1.6M694.90 566.74h1.6M724.67 566.74h1.6M754.44 566.74h1.6M784.21 566.74h1.6M813.98 566.74h1.6M843.75 566.74h1.6M873.52 566.74h1.6M903.29 566.74h1.6M933.06 566.74h1.6M962.83 566.74h1.6M992.60 566.74h1.6M1022.37 566.74h1.6M1052.14 566.74h1.6M1081.91 566.74h1.6M1111.68 566.74h1.6M1141.45 566.74h1.6M1171.22 566.74h1.6M1200.99 566.74h1.6M1230.76 566.74h1.6M1260.53 566.74h1.6M1290.30 566.74h1.6M397.20 596.51h1.6M426.97 596.51h1.6M456.74 596.51h1.6M486.51 596.51h1.6M516.28 596.51h1.6M546.05 596.51h1.6M575.82 596.51h1.6M605.59 596.51h1.6M635.36 596.51h1.6M665.13 596.51h1.6M694.90 596.51h1.6M724.67 596.51h1.6M754.44 596.51h1.6M784.21 596.51h1.6M813.98 596.51h1.6M843.75 596.51h1.6M873.52 596.51h1.6M903.29 596.51h1.6M933.06 596.51h1.6M962.83 596.51h1.6M992.60 596.51h1.6M1022.37 596.51h1.6M1052.14 596.51h1.6M1081.91 596.51h1.6M1111.68 596.51h1.6M1141.45 596.51h1.6M1171.22 596.51h1.6M1200.99 596.51h1.6M1230.76 596.51h1.6M1260.53 596.51h1.6M1290.30 596.51h1.6M397.20 626.28h1.6M426.97 626.28h1.6M456.74 626.28h1.6M486.51 626.28h1.6M516.28 626.28h1.6M546.05 626.28h1.6M575.82 626.28h1.6M605.59 626.28h1.6M635.36 626.28h1.6M665.13 626.28h1.6M694.90 626.28h1.6M724.67 626.28h1.6M754.44 626.28h1.6M784.21 626.28h1.6M813.98 626.28h1.6M843.75 626.28h1.6M873.52 626.28h1.6M903.29 626.28h1.6M933.06 626.28h1.6M962.83 626.28h1.6M992.60 626.28h1.6M1022.37 626.28h1.6M1052.14 626.28h1.6M1081.91 626.28h1.6M1111.68 626.28h1.6M1141.45 626.28h1.6M1171.22 626.28h1.6M1200.99 626.28h1.6M1230.76 626.28h1.6M1260.53 626.28h1.6M1290.30 626.28h1.6M397.20 656.05h1.6M426.97 656.05h1.6M456.74 656.05h1.6M486.51 656.05h1.6M516.28 656.05h1.6M546.05 656.05h1.6M575.82 656.05h1.6M605.59 656.05h1.6M635.36 656.05h1.6M665.13 656.05h1.6M694.90 656.05h1.6M724.67 656.05h1.6M754.44 656.05h1.6M784.21 656.05h1.6M813.98 656.05h1.6M843.75 656.05h1.6M873.52 656.05h1.6M903.29 656.05h1.6M933.06 656.05h1.6M962.83 656.05h1.6M992.60 656.05h1.6M1022.37 656.05h1.6M1052.14 656.05h1.6M1081.91 656.05h1.6M1111.68 656.05h1.6M1141.45 656.05h1.6M1171.22 656.05h1.6M1200.99 656.05h1.6M1230.76 656.05h1.6M1260.53 656.05h1.6M1290.30 656.05h1.6M397.20 685.82h1.6M426.97 685.82h1.6M456.74 685.82h1.6M486.51 685.82h1.6M516.28 685.82h1.6M546.05 685.82h1.6M575.82 685.82h1.6M605.59 685.82h1.6M635.36 685.82h1.6M665.13 685.82h1.6M694.90 685.82h1.6M724.67 685.82h1.6M754.44 685.82h1.6M784.21 685.82h1.6M813.98 685.82h1.6M843.75 685.82h1.6M873.52 685.82h1.6M903.29 685.82h1.6M933.06 685.82h1.6M962.83 685.82h1.6M992.60 685.82h1.6M1022.37 685.82h1.6M1052.14 685.82h1.6M1081.91 685.82h1.6M1111.68 685.82h1.6M1141.45 685.82h1.6M1171.22 685.82h1.6M1200.99 685.82h1.6M1230.76 685.82h1.6M1260.53 685.82h1.6M1290.30 685.82h1.6M397.20 715.59h1.6M426.97 715.59h1.6M456.74 715.59h1.6M486.51 715.59h1.6M516.28 715.59h1.6M546.05 715.59h1.6M575.82 715.59h1.6M605.59 715.59h1.6M635.36 715.59h1.6M665.13 715.59h1.6M694.90 715.59h1.6M724.67 715.59h1.6M754.44 715.59h1.6M784.21 715.59h1.6M813.98 715.59h1.6M843.75 715.59h1.6M873.52 715.59h1.6M903.29 715.59h1.6M933.06 715.59h1.6M962.83 715.59h1.6M992.60 715.59h1.6M1022.37 715.59h1.6M1052.14 715.59h1.6M1081.91 715.59h1.6M1111.68 715.59h1.6M1141.45 715.59h1.6M1171.22 715.59h1.6M1200.99 715.59h1.6M1230.76 715.59h1.6M1260.53 715.59h1.6M1290.30 715.59h1.6M397.20 745.36h1.6M426.97 745.36h1.6M456.74 745.36h1.6M486.51 745.36h1.6M516.28 745.36h1.6M546.05 745.36h1.6M575.82 745.36h1.6M605.59 745.36h1.6M635.36 745.36h1.6M665.13 745.36h1.6M694.90 745.36h1.6M724.67 745.36h1.6M754.44 745.36h1.6M784.21 745.36h1.6M813.98 745.36h1.6M843.75 745.36h1.6M873.52 745.36h1.6M903.29 745.36h1.6M933.06 745.36h1.6M962.83 745.36h1.6M992.60 745.36h1.6M1022.37 745.36h1.6M1052.14 745.36h1.6M1081.91 745.36h1.6M1111.68 745.36h1.6M1141.45 745.36h1.6M1171.22 745.36h1.6M1200.99 745.36h1.6M1230.76 745.36h1.6M1260.53 745.36h1.6M1290.30 745.36h1.6" stroke="#8a8ad8" stroke-width="1.6" opacity="0.9"/>
<path d="M398 477.4H1291" stroke="#b8b8e6" stroke-width="1.4"/>
<path d="M844.3 179V477" stroke="#9a9af2" stroke-width="2"/>
<path d="M844.3 478V556" stroke="#7a1458" stroke-width="2.4"/>
<path d="M844.3 556V774" stroke="#9a98b0" stroke-width="1.6"/>
<path d="M785 268.5L933.5 298.5L726 447L607 358Z" fill="none" stroke="#a8a8dc" stroke-width="1.1"/>
<text x="855" y="450" font-family="Liberation Sans" font-size="8" fill="#a01838" letter-spacing="0.3">gravity</text>
<rect x="929.5" y="405.5" width="9" height="9" fill="#18f018"/><path d="M933.8 414V444" stroke="#18e018" stroke-width="2.5"/><rect x="930" y="443" width="4.5" height="7" fill="#2020ff"/><path d="M932 451L931 455" stroke="#18e018" stroke-width="2"/>
<text x="931" y="403" font-family="Liberation Sans" font-size="7" fill="#40d040">y</text>
</svg>
<div class="t" style="left:193px;top:185.67px;font-size:12.2px;color:#d0d0fa;letter-spacing:-0.4px">MODEL_1</div>
<svg style="left:0;top:0" width="1500" height="802"><path d="M1463.2 193.2L1474.5 187.1L1475.8 214.6L1463.2 193.2V207.7M1475.8 214.6L1487.6 194.8V208.3L1475.8 214.6" fill="none" stroke="#b4b4f6" stroke-width="1.5" stroke-linejoin="round"/><path d="M1474.5 187.1L1465 205M1463.2 207.7L1475.3 200.9L1487.6 194.8" fill="none" stroke="#8c8ef0" stroke-width="1"/><circle cx="1474.5" cy="187.3" r="1.4" fill="#d8d8ff"/><circle cx="1475.8" cy="214.4" r="1.5" fill="#e0e0ff"/><circle cx="1463.4" cy="207.5" r="1.2" fill="#d0d0ff"/></svg>
<svg style="left:220px;top:690px" width="60" height="50"><path d="M14 43V17" stroke="#20c020" stroke-width="1.6"/><path d="M11.5 19L14 14L16.5 19Z" fill="#20c020"/><path d="M14 43H40" stroke="#d02020" stroke-width="1.6"/><path d="M38 40.5L43 43L38 45.5Z" fill="#d02020"/><rect x="12.5" y="41.5" width="3" height="3" fill="#2020d0"/><text x="12" y="10" font-family="Liberation Sans" font-size="10" fill="#c8c8e0">y</text><text x="46" y="44" font-family="Liberation Sans" font-size="10" fill="#c8c8e0">x</text><text x="14" y="42" font-family="Liberation Sans" font-size="8" fill="#c8c8e0">z</text></svg>
<div class="a" style="left:934.5px;top:442px;width:171px;height:100px;background:#eef4fc;box-shadow:1px 1px 1px rgba(0,0,0,0.3)"></div>
<div class="a" style="left:937.7px;top:488px;width:162px;height:21px;background:#3c9af8"></div>
<div class="a" style="left:938px;top:512px;width:162px;height:1.5px;background:#c6cad4"></div>
<div class="t" style="left:954.4px;top:450.83px;font-size:12.6px;color:#4a4ac8;">Part: ground</div>
<div class="t" style="left:954.4px;top:472.53px;font-size:12.6px;color:#4a4ac8;">--Marker: MARKER_1</div>
<div class="t" style="left:954.4px;top:493.73px;font-size:12.6px;color:#2a2ad0;">--Marker: MARKER_2</div>
<div class="t" style="left:954.4px;top:523.63px;font-size:12.6px;color:#4a4ac8;">View Control</div>
<svg style="left:0;top:0" width="1500" height="802"><path d="M1087.5 452.5L1092 456L1087.5 459.5Z" fill="#2a2ad0"/><path d="M1087.5 473.5L1092 477L1087.5 480.5Z" fill="#2a2ad0"/><path d="M1087.5 494.5L1092 498L1087.5 501.5Z" fill="#2a2ad0"/><path d="M1087.5 525.0L1092 528.5L1087.5 532.0Z" fill="#2a2ad0"/></svg>
<div class="a" style="left:1100.5px;top:488px;width:107px;height:250px;background:#eff5fc;box-shadow:1px 1px 1px rgba(0,0,0,0.3)"></div>
<div class="a" style="left:1103px;top:512.3px;width:100.5px;height:21px;background:#3c9af8"></div>
<div class="a" style="left:1105px;top:643.7px;width:97px;height:1.5px;background:#c6cad4"></div>
<div class="t" style="left:1119.7px;top:496.28px;font-size:12.9px;color:#4a4ac8;">Select</div>
<div class="t" style="left:1119.7px;top:517.58px;font-size:12.9px;color:#2a2ad0;">Modify</div>
<div class="t" style="left:1119.7px;top:539.38px;font-size:12.9px;color:#4a4ac8;">Appearance</div>
<div class="t" style="left:1119.7px;top:560.48px;font-size:12.9px;color:#4a4ac8;">Info</div>
<div class="t" style="left:1119.7px;top:581.78px;font-size:12.9px;color:#4a4ac8;">Associativity</div>
<div class="t" style="left:1119.7px;top:603.58px;font-size:12.9px;color:#4a4ac8;">Measure</div>
<div class="t" style="left:1119.7px;top:625.38px;font-size:12.9px;color:#4a4ac8;">Copy</div>
<div class="t" style="left:1119.7px;top:655.58px;font-size:12.9px;color:#4a4ac8;">Delete</div>
<div class="t" style="left:1119.7px;top:677.08px;font-size:12.9px;color:#4a4ac8;">Rename</div>
<div class="t" style="left:1119.7px;top:698.38px;font-size:12.9px;color:#4a4ac8;">(De)activate</div>
<div class="t" style="left:1119.7px;top:719.28px;font-size:12.9px;color:#4a4ac8;">Hide</div>
<svg style="left:1176px;top:512px" width="14" height="20"><path d="M1.5 1.5V15L5 12L7.5 17.5L10 16.5L7.5 11H12Z" fill="#fff" stroke="#333" stroke-width="1"/></svg>
<svg style="left:0;top:0" width="1500" height="802"><g transform="translate(153,119.5) rotate(-12)"><text x="0" y="0" font-family="Liberation Sans" font-weight="bold" font-size="18" fill="#383838" stroke="#fff" stroke-width="3" paint-order="stroke" letter-spacing="-0.4">www.xqu5.com</text><g transform="translate(-58,-11.5) scale(1.08)"><path d="M4 1.5L6 4.5M8.5 0.5V4.5M13 1L10.5 4.5M0.5 8H16M5.5 10.5L1.5 15.5M10.5 10.5L15 15.5" fill="none" stroke="#fff" stroke-width="4.0" stroke-linecap="round" stroke-linejoin="round"/></g><g transform="translate(-40,-11.5) scale(1.08)"><path d="M1 2.5H6.5M3.8 0.5V6M0.5 6H7M3.8 8V12M1.5 9V13M1 11Q4 16 16 15.5M7.5 1.5H11.5M8.5 1.5V12M11 1.5V11M8.5 6H11M7.5 12L11.5 11M12 4H15.5L12.5 12M13 7L16 12" fill="none" stroke="#fff" stroke-width="4.0" stroke-linecap="round" stroke-linejoin="round"/></g><g transform="translate(-22,-11.5) scale(1.08)"><path d="M2 1H15V4.5H2M2 1V9Q2 13.5 0 16M4.5 7H15M8.5 7L6 10.5H14M12 9L14 11M9.5 10.5V15.5M5.5 13H13.5M3.5 15.5H16" fill="none" stroke="#fff" stroke-width="4.0" stroke-linecap="round" stroke-linejoin="round"/></g><g transform="translate(-58,-11.5) scale(1.08)"><path d="M4 1.5L6 4.5M8.5 0.5V4.5M13 1L10.5 4.5M0.5 8H16M5.5 10.5L1.5 15.5M10.5 10.5L15 15.5" fill="none" stroke="#303030" stroke-width="1.9" stroke-linecap="square"/></g><g transform="translate(-40,-11.5) scale(1.08)"><path d="M1 2.5H6.5M3.8 0.5V6M0.5 6H7M3.8 8V12M1.5 9V13M1 11Q4 16 16 15.5M7.5 1.5H11.5M8.5 1.5V12M11 1.5V11M8.5 6H11M7.5 12L11.5 11M12 4H15.5L12.5 12M13 7L16 12" fill="none" stroke="#303030" stroke-width="1.9" stroke-linecap="square"/></g><g transform="translate(-22,-11.5) scale(1.08)"><path d="M2 1H15V4.5H2M2 1V9Q2 13.5 0 16M4.5 7H15M8.5 7L6 10.5H14M12 9L14 11M9.5 10.5V15.5M5.5 13H13.5M3.5 15.5H16" fill="none" stroke="#303030" stroke-width="1.9" stroke-linecap="square"/></g></g></svg>
<svg style="left:0;top:0" width="1500" height="802"><g transform="translate(1120.5,690) rotate(-12)"><text x="0" y="0" font-family="Liberation Sans" font-weight="bold" font-size="18" fill="#383838" stroke="#fff" stroke-width="3" paint-order="stroke" letter-spacing="-0.4">www.xqu5.com</text><g transform="translate(-58,-11.5) scale(1.08)"><path d="M4 1.5L6 4.5M8.5 0.5V4.5M13 1L10.5 4.5M0.5 8H16M5.5 10.5L1.5 15.5M10.5 10.5L15 15.5" fill="none" stroke="#fff" stroke-width="4.0" stroke-linecap="round" stroke-linejoin="round"/></g><g transform="translate(-40,-11.5) scale(1.08)"><path d="M1 2.5H6.5M3.8 0.5V6M0.5 6H7M3.8 8V12M1.5 9V13M1 11Q4 16 16 15.5M7.5 1.5H11.5M8.5 1.5V12M11 1.5V11M8.5 6H11M7.5 12L11.5 11M12 4H15.5L12.5 12M13 7L16 12" fill="none" stroke="#fff" stroke-width="4.0" stroke-linecap="round" stroke-linejoin="round"/></g><g transform="translate(-22,-11.5) scale(1.08)"><path d="M2 1H15V4.5H2M2 1V9Q2 13.5 0 16M4.5 7H15M8.5 7L6 10.5H14M12 9L14 11M9.5 10.5V15.5M5.5 13H13.5M3.5 15.5H16" fill="none" stroke="#fff" stroke-width="4.0" stroke-linecap="round" stroke-linejoin="round"/></g><g transform="translate(-58,-11.5) scale(1.08)"><path d="M4 1.5L6 4.5M8.5 0.5V4.5M13 1L10.5 4.5M0.5 8H16M5.5 10.5L1.5 15.5M10.5 10.5L15 15.5" fill="none" stroke="#303030" stroke-width="1.9" stroke-linecap="square"/></g><g transform="translate(-40,-11.5) scale(1.08)"><path d="M1 2.5H6.5M3.8 0.5V6M0.5 6H7M3.8 8V12M1.5 9V13M1 11Q4 16 16 15.5M7.5 1.5H11.5M8.5 1.5V12M11 1.5V11M8.5 6H11M7.5 12L11.5 11M12 4H15.5L12.5 12M13 7L16 12" fill="none" stroke="#303030" stroke-width="1.9" stroke-linecap="square"/></g><g transform="translate(-22,-11.5) scale(1.08)"><path d="M2 1H15V4.5H2M2 1V9Q2 13.5 0 16M4.5 7H15M8.5 7L6 10.5H14M12 9L14 11M9.5 10.5V15.5M5.5 13H13.5M3.5 15.5H16" fill="none" stroke="#303030" stroke-width="1.9" stroke-linecap="square"/></g></g></svg>
</body></html>
